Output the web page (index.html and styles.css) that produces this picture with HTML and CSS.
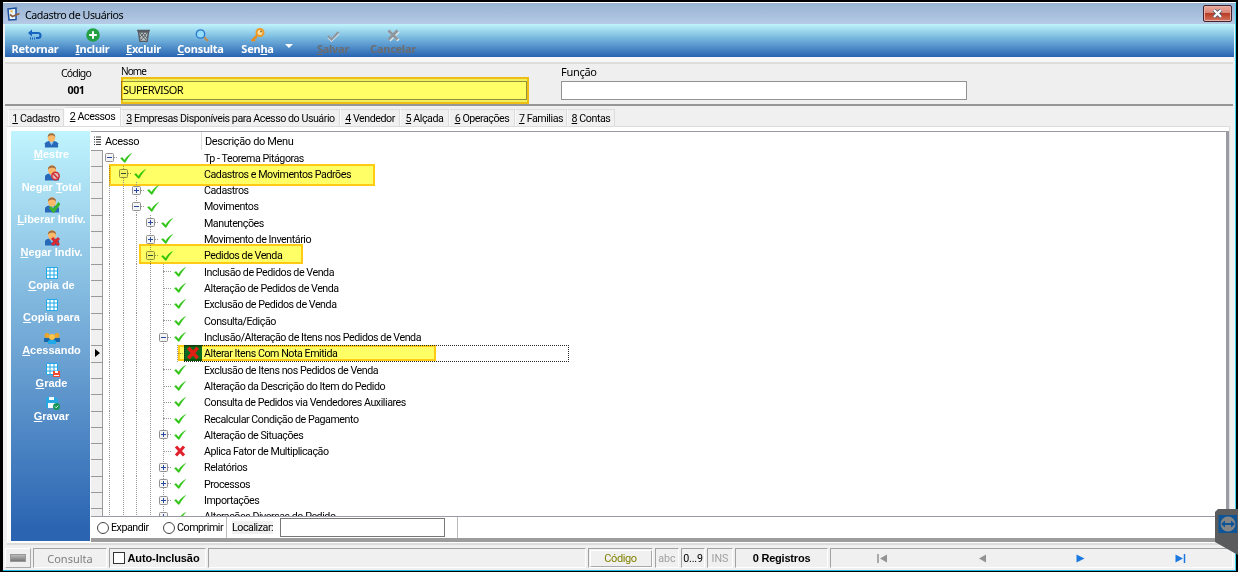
FILE: index.html
```html
<!DOCTYPE html>
<html lang="pt-BR">
<head>
  <meta charset="utf-8">
  <title>Cadastro de Usuários</title>
  <link rel="stylesheet" href="styles.css">
</head>
<body>
  <svg class="defs" width="0" height="0">
    <symbol id="check" viewBox="0 0 12 10"><path d="M.5 5.2 2.2 4.6 4.6 7.2C6.300 4.200 8.500 1.800 11.600.5 9 3.200 7 6 5.300 9.300H4.200Z" fill="#2fc414" stroke="#35c41c" stroke-width=".5"/></symbol>
    <symbol id="cross" viewBox="0 0 12 12"><path d="M2 1.500 10 10.500M10 1.500 2 10.500" stroke="#e0202c" stroke-width="3"/></symbol>
    <symbol id="user" viewBox="0 0 16 16"><path d="M1 15.500V11C2 9 4 8.500 8 8.500S14 9 15 11V15.500Z" fill="#2868b8"/><path d="m5.500 9 2.500 4 2.500-4Z" fill="#8cc8f4"/><ellipse cx="8" cy="5" rx="4" ry="4.800" fill="#f9b96a"/><path d="M4 4.500C3.500-1 12.500-1 12 4.500 10.500 1.800 6 1.800 4 4.500Z" fill="#9c6a40"/></symbol>
    <symbol id="table" viewBox="0 0 12 12"><path d="M.5.5H11.500V11.500H.5Z" fill="#fff" stroke="#20a8e8"/><path d="M.5 4H11.500M.5 8H11.500M4 0V12M8 0V12" stroke="#20a8e8"/></symbol>
  </svg>

  <div class="window">
    <div class="titlebar">
      <svg width="15" height="14" viewBox="0 0 15 14"><path d="M2 2 10 1V12.500L3 13Z" fill="#e8f6ff" stroke="#1c4f9c" stroke-width="1.500"/><path d="m4 7.500 2.500 2 7-3" stroke="#8c6040" stroke-width="1.800" fill="none"/><path d="m3.500 4 3-1v3Z" fill="#f3b431"/></svg>
      <span class="title">Cadastro de Usuários</span>
      <button class="close"><svg width="11" height="9" viewBox="0 0 11 9"><path d="m2 1 7 7M9 1 2 8" stroke="#4d5d72" stroke-width="3.800"/><path d="m2 1 7 7M9 1 2 8" stroke="#fff" stroke-width="2.200"/></svg></button>
    </div>

    <div class="toolbar">
      <div class="tool retornar">
        <svg width="14" height="13" viewBox="0 0 14 13"><path d="M3 4H10Q12.500 4 12.500 6.500T10 9H8" stroke="#1764c0" stroke-width="2.200" fill="none"/><path d="M0 4 4 .5v7Z" fill="#1764c0"/><path d="M2 9.500H8" stroke="#1764c0" stroke-dasharray="1 1" stroke-width="2"/></svg>
        <span>Retornar</span>
      </div>
      <div class="tool incluir">
        <svg width="14" height="14" viewBox="0 0 14 14"><circle cx="7" cy="7" r="6.800" fill="#24a043"/><path d="M7 3.200V10.800M3.200 7H10.800" stroke="#fff" stroke-width="2"/></svg>
        <span><u>I</u>ncluir</span>
      </div>
      <div class="tool excluir">
        <svg width="13" height="13" viewBox="0 0 13 13"><path d="M0 1.500H13M1.500 3 3 12.500H10L11.500 3Z" stroke="#555b60" stroke-width="1.500" fill="#b8c0c4"/><path d="m3 4 6 7M6 4l4 5M10 4l-6 7M7 4 3 8" stroke="#555b60"/></svg>
        <span><u>E</u>xcluir</span>
      </div>
      <div class="tool consulta">
        <svg class="lens" width="14" height="13" viewBox="0 0 14 13"><path d="m9 8 4 4" stroke="#c28a4a" stroke-width="2"/><circle cx="5.500" cy="5" r="4.200" fill="#94dcfa" stroke="#2879cc" stroke-width="1.300"/></svg>
        <span><u>C</u>onsulta</span>
      </div>
      <div class="tool senha">
        <svg width="15" height="14" viewBox="0 0 15 14"><path d="m1.500 13 7-7M3 11l2 2M5 9l1.500 1.500" stroke="#e98c1c" stroke-width="2"/><circle cx="10" cy="4.500" r="3.500" fill="#ffe0a0" stroke="#f09a26" stroke-width="2"/><circle cx="11" cy="3.500" r="1" fill="#94723b"/></svg>
        <span>Sen<u>h</u>a</span>
      </div>
      <div class="arrow"></div>
      <div class="tool salvar off">
        <svg width="13" height="11" viewBox="0 0 13 11"><path d="m1.500 6 3 3 7-7" stroke="#dce6ee" stroke-width="3" fill="none"/><path d="m1 5 3.500 3.500L11.500 1" stroke="#8d969d" stroke-width="2.200" fill="none"/></svg>
        <span><u>S</u>alvar</span>
      </div>
      <div class="tool cancelar off">
        <svg width="13" height="13" viewBox="0 0 13 13"><path d="m2.500 2.500 9 9M11.500 2.500l-9 9" stroke="#dce6ee" stroke-width="3"/><path d="m1.500 1.500 9 9M10.500 1.500l-9 9" stroke="#8d969d" stroke-width="2.800"/></svg>
        <span>Cancelar</span>
      </div>
    </div>

    <div class="header">
      <div class="field codigo"><label>Código</label><b>001</b></div>
      <div class="field nome"><label>Nome</label><div class="input">SUPERVISOR<div class="marker campo"></div></div></div>
      <div class="field funcao"><label>Função</label><div class="input"></div></div>
    </div>

    <div class="tabs">
      <div class="tab" style="width:56px"><span><u>1</u> Cadastro</span></div>
      <div class="tab active" style="width:57px"><span><u>2</u> Acessos</span></div>
      <div class="tab" style="width:219px"><span><u>3</u> Empresas Disponíveis para Acesso do Usuário</span></div>
      <div class="tab" style="width:60px"><span><u>4</u> Vendedor</span></div>
      <div class="tab" style="width:49px"><span><u>5</u> Alçada</span></div>
      <div class="tab" style="width:66px"><span><u>6</u> Operações</span></div>
      <div class="tab" style="width:52px"><span><u>7</u> Familias</span></div>
      <div class="tab" style="width:48px"><span><u>8</u> Contas</span></div>
    </div>

    <div class="page">
      <div class="sidebar">
        <div class="action"><svg width="15" height="15"><use href="#user"/></svg><span><u>M</u>estre</span></div>
        <div class="action"><svg width="16" height="16" viewBox="0 0 16 16"><use href="#user"/><circle cx="11.500" cy="11" r="3.700" fill="#e4b7b7" stroke="#d02f35" stroke-width="1.500"/><path d="m9 8.500 5 5" stroke="#d02f35" stroke-width="1.500"/></svg><span>Negar <u>T</u>otal</span></div>
        <div class="action"><svg width="16" height="16" viewBox="0 0 16 16"><use href="#user"/><path d="m6 10 3.500 4 6-8" fill="none" stroke="#38b52c" stroke-width="3"/></svg><span><u>L</u>iberar Indiv.</span></div>
        <div class="action"><svg width="16" height="16" viewBox="0 0 16 16"><use href="#user"/><path d="m8 8 7 7M15 8l-7 7" stroke="#d82a30" stroke-width="3"/></svg><span><u>N</u>egar Indiv.</span></div>
        <div class="action"><svg width="12" height="12"><use href="#table"/></svg><span><u>C</u>opia de</span></div>
        <div class="action"><svg width="12" height="12"><use href="#table"/></svg><span><u>C</u>opia para</span></div>
        <div class="action"><svg width="16" height="12" viewBox="0 0 16 12"><path d="M0 10V6H16V10ZM4 12V8H12V12Z" fill="#1766a8"/><path d="M4 12V9l2-1h4l2 1v3Z" fill="#20a9e8"/><circle cx="3" cy="3.500" r="2.500" fill="#eaa52b"/><circle cx="13" cy="3.500" r="2.500" fill="#eaa52b"/><circle cx="8" cy="5" r="3" fill="#ffc348"/></svg><span><u>A</u>cessando</span></div>
        <div class="action"><svg class="shift" width="14" height="14" viewBox="0 0 14 14"><use href="#table" width="12" height="12"/><path d="M7 8H14V14H7Z" fill="#f04a35"/><path d="M9 8h3v2H9ZM8 12h5v1H8Z" fill="#fff"/></svg><span><u>G</u>rade</span></div>
        <div class="action"><svg class="shift" width="14" height="14" viewBox="0 0 14 14"><path d="M0 1H9L12 3V12H0Z" fill="#27a8e0"/><path d="M3 1h5v3H3ZM2 7h8v5H2Z" fill="#f4fbff"/><circle cx="10.500" cy="10.500" r="3.500" fill="#159557"/><path d="m9 10.500 1.200 1.200 2-2" stroke="#fff" fill="none"/></svg><span><u>G</u>ravar</span></div>
      </div>

      <div class="main">
        <div class="grid">
          <div class="grid-head">
            <div class="cell-mark"><svg width="7" height="9" viewBox="0 0 7 9"><path d="M0 1H1M2 1H7M0 3.500H1M2 3.500H7M0 6H1M2 6H7M0 8.500H1M2 8.500H7" stroke="#333"/></svg></div>
            <div class="col-acesso">Acesso</div>
            <div class="col-menu">Descrição do Menu</div>
          </div>
          <div class="rows" id="rows"></div>
        </div>
        <div class="search">
          <label class="opt"><i class="radio"></i>Expandir</label>
          <label class="opt second"><i class="radio"></i>Comprimir</label>
          <div class="find"><span>Localizar:</span><div class="find-input"></div></div>
        </div>
      </div>
    </div>

    <div class="status">
      <div class="panel led"><i></i></div>
      <div class="panel mode">Consulta</div>
      <div class="panel auto"><i class="box"></i><span>Auto-Inclusão</span></div>
      <div class="panel fill"></div>
      <div class="panel order"><span>Código</span></div>
      <div class="panel abc">abc</div>
      <div class="panel num">0...9</div>
      <div class="panel ins">INS</div>
      <div class="panel count"><span>0 Registros</span></div>
      <div class="panel nav">
        <svg width="11" height="9" viewBox="0 0 11 9"><path d="M1 0V9" stroke="#929292" stroke-width="1.500"/><path d="M10 .5V8.500L3 4.500Z" fill="#929292"/></svg>
        <svg width="9" height="9" viewBox="0 0 9 9"><path d="M8 .5V8.500L1 4.500Z" fill="#929292"/></svg>
        <svg width="9" height="9" viewBox="0 0 9 9"><path d="M.5.5V8.500L8.500 4.500Z" fill="#1b78e0"/></svg>
        <svg width="11" height="9" viewBox="0 0 11 9"><path d="M.5.5V8.500L8 4.500Z" fill="#1b78e0"/><path d="M9.500 0V9" stroke="#1b78e0" stroke-width="1.500"/></svg>
      </div>
    </div>
  </div>

  <div class="remote">
    <svg width="23" height="46" viewBox="0 0 23 46"><path d="M0 3 3 0H23V46L0 33Z" fill="#595b5d"/><path d="M3.500 6H22V24H3.500Z" fill="#0d5596"/><circle cx="13" cy="15" r="7.500" fill="#858585"/><path d="m6 15 4-3.500v2.500h6v-2.500l4 3.500-4 3.500v-2.500h-6v2.500Z" fill="#0d5596"/></svg>
  </div>

  <script src="script.js"></script>
</body>
</html>
```
FILE: styles.css
```css
body {
  margin: 0;
  height: 572px;
  overflow: hidden;
  background-color: #000;
  font-family: Roboto, "Liberation Sans", sans-serif;
  font-size: 10.7px;
  letter-spacing: -0.46px;
  color: #000;
}

* {
  box-sizing: border-box;
}

svg {
  display: block;
  flex: none;
}

u {
  text-underline-offset: 1px;
}

.defs {
  position: absolute;
}

.window {
  display: flex;
  flex-direction: column;
  height: 569px;
  margin: 2px 2px 0 3px;
  padding: 0 2px 0 2px;
  background-color: #f0f0f0;
  border-top: 1px solid #fff;
  border-right: 1px solid #39d8f0;
  border-bottom: 1px solid #17bce0;
}

.titlebar {
  display: flex;
  align-items: center;
  height: 21px;
  flex: none;
  margin: 0 -2px;
  padding: 0 2px 0 3px;
  background: linear-gradient(#98b3d2, #b5cae5);
  font-family: "Noto Sans", sans-serif;
}

.title {
  margin: 2px 0 0 4px;
}

.close {
  display: flex;
  align-items: center;
  justify-content: center;
  width: 29px;
  height: 17px;
  margin-left: auto;
  margin-right: 1px;
  padding: 0;
  border: 1px solid #43232d;
  border-radius: 2px;
  background: linear-gradient(#eba99c, #d98478 48%, #b93c25 50%, #d4735d);
  box-shadow: inset 0 0 0 1px #e7b0a6;
}

.toolbar {
  position: relative;
  display: flex;
  height: 33px;
  flex: none;
  margin-right: -1px;
  background: linear-gradient(#c0f4fc, #74b4dc 45%, #2763b3);
  color: #fff;
  font: bold 11px "Noto Sans", sans-serif;
  letter-spacing: -0.25px;
}

.tool {
  display: flex;
  flex-direction: column;
  align-items: center;
  justify-content: flex-end;
  white-space: nowrap;
}

.tool span {
  line-height: 13px;
  margin-bottom: 2px;
}

.lens {
  margin-left: 3px;
}

.retornar { width: 60px; }
.incluir { width: 55px; }
.excluir { width: 47px; }
.consulta { width: 67px; }
.senha { width: 47px; }
.salvar { width: 60px; margin-left: 10px; }
.cancelar { width: 60px; }

.arrow {
  margin: 20px 0 0 4px;
  width: 0;
  height: 0;
  border: 4px solid transparent;
  border-top-color: #fff;
}

.off {
  color: #6a6c70;
}

.header {
  display: flex;
  height: 49px;
  flex: none;
  padding-top: 5px;
  background: linear-gradient(#f7f7f7 5px, #ddd 5px 7px, #efefef 7px);
  border-bottom: 2px solid #969696;
  font-family: "Noto Sans", sans-serif;
}

.field {
  display: flex;
  flex-direction: column;
}

.field label {
  line-height: 15px;
}

.codigo {
  width: 116px;
  align-items: center;
  padding: 4px 0 0 26px;
}

.codigo label {
  font-size: 10.5px;
  letter-spacing: -0.8px;
}

.codigo b {
  margin-top: 2px;
}

.nome {
  width: 439px;
  padding: 2px 0 0 0;
}

.nome label {
  font-size: 10px;
  letter-spacing: -0.9px;
}

.funcao {
  padding: 2px 0 0 1px;
}

.funcao label {
  font-size: 11px;
  letter-spacing: -0.3px;
}

.input {
  position: relative;
  width: 406px;
  height: 19px;
  margin-top: 2px;
  padding-left: 1px;
  border: 1px solid #929292;
  background-color: #fff;
  line-height: 15px;
  font-size: 11px;
  letter-spacing: -0.55px;
}

.tabs {
  display: flex;
  height: 20px;
  flex: none;
  padding: 3px 0 0 3px;
}

.tab {
  display: flex;
  align-items: center;
  justify-content: center;
  border: 1px solid #dcdcdc;
  border-left-color: #fafafa;
  border-bottom: 0;
  white-space: nowrap;
}

.tab.active {
  margin-top: -2px;
  padding-bottom: 1px;
  background-color: #fff;
}

.page {
  display: flex;
  height: 419px;
  flex: none;
  margin: 0 3px 0 2px;
  padding: 4px 0 0 4px;
  background-color: #fff;
  border: 1px solid #dcdcdc;
  border-left: 0;
  border-bottom-width: 2px;
}

.sidebar {
  width: 79px;
  height: 410px;
  padding-top: 3px;
  background: linear-gradient(#c0f4fe, #2b65b2 97%);
  color: #fff;
  font: bold 11px "Liberation Sans", sans-serif;
  letter-spacing: 0;
}

.action {
  display: flex;
  flex-direction: column;
  align-items: center;
  justify-content: flex-end;
  height: 32.7px;
  padding: 0 0 2px 2px;
  white-space: nowrap;
}

.action span {
  line-height: 12px;
}

.action .shift {
  margin-left: 3px;
}

.sidebar .action:first-child {
  height: 28px;
}

.main {
  flex: 1;
  display: flex;
  flex-direction: column;
  margin-left: 1px;
  border-top: 1px solid #9b9ba3;
  border-right: 3px solid #9b9ba3;
  border-bottom: 4px solid #9c9c9c;
  height: 411px;
}

.grid {
  height: 385px;
  flex: none;
  overflow: hidden;
  border-bottom: 1px solid #9b9ba3;
}

.grid-head {
  display: flex;
  height: 17.500px;
  line-height: 19px;
  font-size: 11px;
  letter-spacing: -0.35px;
}

.cell-mark {
  display: flex;
  justify-content: center;
  align-items: center;
  width: 12px;
}

.col-acesso {
  width: 99px;
  padding-left: 2px;
  border-right: 1px solid #ddd;
}

.col-menu {
  padding-left: 3px;
}

.row {
  position: relative;
  display: flex;
  height: 16.320px;
}

.gutter {
  width: 12px;
  background-color: #f0f0f0;
  border: 1px solid #999;
  border-width: 1px 1px 0 0;
}

.tree {
  display: flex;
  align-items: center;
  width: 101px;
}

.guide {
  width: 13.550px;
  height: 100%;
  background: repeating-linear-gradient(#999 0 1px, #fff0 1px 2px) 6px 0 / 1px 100% no-repeat;
}

.node {
  display: flex;
  align-items: center;
  width: 17px;
  height: 100%;
  padding-left: 2px;
  background: repeating-linear-gradient(#999 0 1px, #fff0 1px 2px) 6px 0 / 1px 100% no-repeat;
}

.node::after {
  content: "";
  width: 3px;
  border-top: 1px dotted #999;
}

.row:first-child .node {
  background: none;
}

.leaf {
  padding-left: 6px;
}

.leaf::after {
  width: 8px;
}

.tree svg {
  width: 12px;
  height: 12px;
}

.name {
  line-height: 17px;
  white-space: nowrap;
}

/* yellow marker over a row or a field */
.marker {
  position: absolute;
  border: 2px solid #ffcb14;
  background-color: #ffff66;
  mix-blend-mode: multiply;
}

.marker.campo { left: -1px; top: -5px; width: 408px; height: 27px; }
.marker.padroes { left: 18px; top: -2px; width: 266px; height: 22px; }
.marker.pedidos { left: 48px; top: -3px; width: 164px; height: 20px; }
.marker.alterar { left: 87px; top: 0; width: 258px; height: 16px; }

.pointer::after {
  content: "";
  display: block;
  margin: 3px 0 0 4px;
  border: 4px solid transparent;
  border-left: 5px solid #000;
  border-right: 0;
}

.selected .tree svg {
  width: 18px;
  height: 16px;
  margin-left: -4px;
  padding: 1px 2px;
  background-color: #0b6b4c;
}

.focus {
  position: absolute;
  left: 93px;
  top: 0;
  width: 385px;
  height: 17px;
  border: 1px dotted #222;
}

.search {
  display: flex;
  align-items: center;
  flex: 1;
}

.opt {
  display: flex;
  align-items: center;
  width: 66px;
  padding-left: 6px;
}

.opt.second {
  width: 69px;
}

.radio {
  width: 12px;
  height: 12px;
  margin-right: 2px;
  border: 1px solid #444;
  border-radius: 50%;
  flex: none;
}

.find {
  display: flex;
  align-items: center;
  width: 232px;
  height: 100%;
  padding-left: 5px;
  border: 1px solid #bbb;
  border-width: 0 1px;
}

.find span {
  width: 41px;
  margin-right: 7px;
  background-color: #f0f0f0;
}

.find-input {
  width: 165px;
  height: 19px;
  border: 1px solid #777;
}

.status {
  display: flex;
  height: 22px;
  flex: none;
  margin-top: 3px;
  gap: 2px;
}

.panel {
  display: flex;
  align-items: center;
  justify-content: center;
  height: 20px;
  border: 1px solid #a2a2a2;
  border-right-color: #fff;
  border-bottom-color: #fff;
  white-space: nowrap;
}

.led { width: 26px; border-color: #fff #aaa #aaa #fff; }

.led i {
  width: 16px;
  height: 8px;
  background: linear-gradient(#bbb, #777);
  border: 1px solid #999;
}

.mode { width: 74px; color: #808080; font: 11px "Noto Sans", sans-serif; letter-spacing: 0; }
.auto { width: 97px; padding-right: 2px; font: bold 11px "Liberation Sans", sans-serif; letter-spacing: -0.1px; }

.box {
  width: 12px;
  height: 12px;
  margin-right: 2px;
  border: 1px solid #333;
  background-color: #fff;
}

.fill { width: 378px; }
.order { width: 65px; color: #808000; font-size: 11px; letter-spacing: -0.4px; }

.order span {
  width: 62px;
  height: 17px;
  line-height: 16px;
  text-align: center;
  border: 1px solid #aaa;
  border-top-color: #fff;
  border-left-color: #fff;
}

.abc { width: 24px; color: #a0a0a0; letter-spacing: 0; }
.num { width: 24px; letter-spacing: -0.2px; }
.ins { width: 26px; color: #a0a0a0; letter-spacing: 0; }
.count { width: 93px; font: bold 11px "Liberation Sans", sans-serif; letter-spacing: -0.2px; }

.nav {
  flex: 1;
  justify-content: space-between;
  padding: 0 46px 0 46px;
}

.remote {
  position: absolute;
  left: 1215px;
  top: 509px;
}
```
FILE: script.js
```javascript
const items = [
  [0, '-', 'Tp - Teorema Pitágoras'],
  [1, '-', 'Cadastros e Movimentos Padrões', 'padroes'],
  [2, '+', 'Cadastros'],
  [2, '-', 'Movimentos'],
  [3, '+', 'Manutenções'],
  [3, '+', 'Movimento de Inventário'],
  [3, '-', 'Pedidos de Venda', 'pedidos'],
  [4, '', 'Inclusão de Pedidos de Venda'],
  [4, '', 'Alteração de Pedidos de Venda'],
  [4, '', 'Exclusão de Pedidos de Venda'],
  [4, '', 'Consulta/Edição'],
  [4, '-', 'Inclusão/Alteração de Itens nos Pedidos de Venda'],
  [5, '', 'Alterar Itens Com Nota Emitida', 'alterar'],
  [4, '', 'Exclusão de Itens nos Pedidos de Venda'],
  [4, '', 'Alteração da Descrição do Item do Pedido'],
  [4, '', 'Consulta de Pedidos via Vendedores Auxiliares'],
  [4, '', 'Recalcular Condição de Pagamento'],
  [4, '+', 'Alteração de Situações'],
  [4, '', 'Aplica Fator de Multiplicação'],
  [4, '+', 'Relatórios'],
  [4, '+', 'Processos'],
  [4, '+', 'Importações'],
  [4, '+', 'Alterações Diversas do Pedido']
];
const denied = ['Alterar Itens Com Nota Emitida', 'Aplica Fator de Multiplicação'];

function box(sign) {
  let plus = sign === '+' ? 'M4.5 2V7' : '';
  return `<svg style="width:9px;height:9px" viewBox="0 0 9 9"><rect x=".5" y=".5" width="8" height="8" rx="1" fill="#f4f4f4" stroke="#909090"/><path d="M2 4.5H7${plus}" stroke="#28489c"/></svg>`;
}

document.getElementById('rows').innerHTML = items.map(([level, sign, name, marker]) => {
  let selected = marker === 'alterar';
  return `<div class="row ${selected ? 'selected' : ''}">
    <div class="gutter ${selected ? 'pointer' : ''}"></div>
    <div class="tree">
      ${'<i class="guide"></i>'.repeat(level)}
      <div class="node ${sign ? '' : 'leaf'}">${sign ? box(sign) : ''}</div>
      <svg><use href="#${denied.includes(name) ? 'cross' : 'check'}"/></svg>
    </div>
    <div class="name">${name}</div>
    ${marker ? `<div class="marker ${marker}"></div>` : ''}
    ${selected ? '<div class="focus"></div>' : ''}
  </div>`;
}).join('');
```
